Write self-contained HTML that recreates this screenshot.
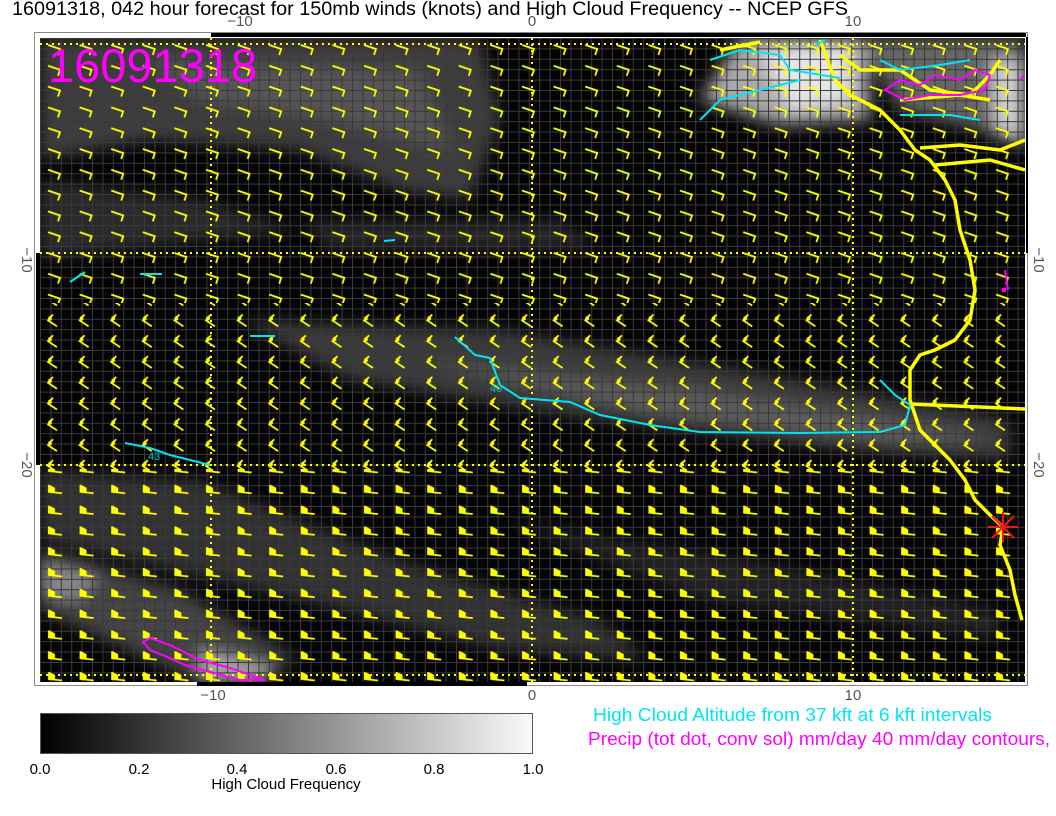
<!DOCTYPE html>
<html><head><meta charset="utf-8"><style>
html,body{margin:0;padding:0;background:#fff;}
svg{display:block;}
text{font-family:"Liberation Sans",sans-serif;}
</style></head><body>
<svg width="1056" height="816" viewBox="0 0 1056 816" xmlns="http://www.w3.org/2000/svg">
<defs>
<pattern id="grid" x="40" y="38" width="10.4" height="10.4" patternUnits="userSpaceOnUse">
<path d="M0.5,0 V10.4 M0,0.5 H10.4" stroke="#3a3a3a" stroke-width="1" fill="none"/>
</pattern>
<pattern id="pA" x="40" y="40" width="31.6" height="20.8" patternUnits="userSpaceOnUse">
<path d="M8,5 L20,9 L18,15" stroke="#ffff00" stroke-width="1.8" fill="none"/>
</pattern>
<pattern id="pB" x="40" y="40" width="31.6" height="20.8" patternUnits="userSpaceOnUse">
<path d="M13,4 L8,10 L17,16" stroke="#ffff00" stroke-width="1.8" fill="none"/>
<path d="M8,7 L11,5 L12,9 L9,11Z" fill="#ffff00"/>
</pattern>
<pattern id="pC" x="40" y="40" width="31.6" height="20.8" patternUnits="userSpaceOnUse">
<path d="M8,15 L22,16.5" stroke="#ffff00" stroke-width="1.8" fill="none"/>
<path d="M8,8 L9.5,8 L15,11 L15,15 L8,15Z" fill="#ffff00"/>
</pattern>
<filter id="bl" x="-20%" y="-20%" width="140%" height="140%"><feGaussianBlur stdDeviation="8"/></filter>
<clipPath id="pc"><rect x="40" y="38" width="985" height="644"/></clipPath>
<linearGradient id="cb" x1="0" x2="1"><stop offset="0" stop-color="#000"/><stop offset="1" stop-color="#fafafa"/></linearGradient>
</defs>

<text x="12" y="15" font-size="19" fill="#000" textLength="836" lengthAdjust="spacingAndGlyphs">16091318, 042 hour forecast for 150mb winds (knots) and High Cloud Frequency -- NCEP GFS</text>
<g font-size="15" fill="#555" text-anchor="middle">
<text x="240" y="26">−10</text><text x="532" y="26">0</text><text x="853" y="26">10</text>
<text x="213" y="700">−10</text><text x="532" y="700">0</text><text x="853" y="700">10</text>
</g>
<text transform="translate(22,260) rotate(90)" font-size="15" fill="#555" text-anchor="middle">−10</text>
<text transform="translate(22,465) rotate(90)" font-size="15" fill="#555" text-anchor="middle">−20</text>
<text transform="translate(1034,260) rotate(90)" font-size="15" fill="#555" text-anchor="middle">−10</text>
<text transform="translate(1034,465) rotate(90)" font-size="15" fill="#555" text-anchor="middle">−20</text>

<rect x="34.5" y="32.5" width="993" height="653" fill="none" stroke="#888" stroke-width="1"/>
<rect x="211" y="33" width="815" height="4" fill="#000"/>
<rect x="36" y="253" width="4" height="212" fill="#000"/>
<rect x="1026" y="37" width="2" height="216" fill="#000"/>
<rect x="197" y="682" width="330" height="4" fill="#000"/>

<g clip-path="url(#pc)">
<rect x="40" y="38" width="985" height="644" fill="#040404"/>
<g filter="url(#bl)">
<path d="M40,38 L480,38 L500,120 L470,200 L400,190 L300,150 L150,140 L40,160Z" fill="#3c3c3c"/>
<path d="M150,60 L420,70 L450,150 L330,120 L200,100Z" fill="#555"/>
<path d="M40,180 L200,200 L300,230 L40,260Z" fill="#2a2a2a"/>
<path d="M300,220 L560,220 L600,250 L330,250Z" fill="#262626"/>
<path d="M740,38 L870,38 L870,120 L780,125 L700,100Z" fill="#aaa"/>
<path d="M760,50 L850,45 L850,100 L790,110Z" fill="#e6e6e6"/>
<path d="M860,38 L1025,38 L1025,150 L980,130 L900,110Z" fill="#666"/>
<path d="M990,60 L1025,60 L1025,140 L995,130Z" fill="#cfcfcf"/>
<path d="M240,320 L500,330 L800,380 L1010,420 L1010,460 L850,450 L600,420 L350,380Z" fill="#3a3a3a"/>
<path d="M420,360 L700,390 L900,420 L1000,440 L900,445 L650,415Z" fill="#5c5c5c"/>
<path d="M40,470 L200,480 L400,560 L600,620 L650,660 L500,650 L300,600 L40,540Z" fill="#333"/>
<path d="M40,550 L180,590 L300,660 L200,682 L40,610Z" fill="#444"/>
<path d="M40,560 L100,575 L80,600 L40,595Z" fill="#888"/>
<path d="M500,520 L750,560 L1000,610 L1000,640 L700,600Z" fill="#222"/>
<path d="M200,650 L280,670 L260,682 L200,682Z" fill="#aaa"/>
</g>
<rect x="40" y="38" width="985" height="644" fill="url(#grid)"/>
<rect x="40" y="38" width="985" height="265" fill="url(#pA)"/>
<rect x="40" y="303" width="985" height="166" fill="url(#pB)"/>
<rect x="40" y="469" width="985" height="213" fill="url(#pC)"/>
<g stroke="#ffff00" stroke-width="2" stroke-dasharray="2,4" fill="none">
<path d="M40,44 H1025 M40,253 H1025 M40,465 H1025 M40,675 H1025"/>
<path d="M211,38 V682 M532,38 V682 M853,38 V682"/>
</g>
<g stroke="#ffff00" stroke-width="3.5" fill="none" stroke-linejoin="round">
<path d="M820,40 L835,80 L850,95 L880,110 L900,130 L915,150 L930,160 L945,180 L955,200 L960,230 L970,260 L975,290 L970,320 L955,340 L935,350 L920,355 L910,370 L910,400 L920,430 L935,445 L950,460 L965,480 L975,500 L990,515 L1003,527 L1000,545 L1010,570 L1015,595 L1022,620"/>
<path d="M910,404 L1025,409"/>
<path d="M920,148 L960,145 L1000,150 L1025,140"/>
<path d="M935,165 L990,160 L1025,170"/>
<path d="M720,50 L760,42 M840,55 L860,70 L900,70 L930,90 L970,95 L990,75 L1000,60"/>
<path d="M900,100 L960,95 L990,100"/>
</g>
<g stroke="#00e5f0" stroke-width="2" fill="none">
<path d="M455,337 L475,355 L490,358 L500,385 L520,398 L570,402 L600,415 L650,425 L700,432 L800,433 L880,432 L905,425 L910,405 L895,395 L880,380"/>
<path d="M125,443 L150,448 L170,455 L210,465"/>
<path d="M250,336 L275,336"/>
<path d="M70,282 L85,272 M140,274 L162,274"/>
<path d="M384,241 L395,240"/>
<path d="M710,60 L740,50 L780,55 L790,70 L840,78 M700,120 L720,100 L760,90 L800,80 M900,115 L950,115 L980,120"/>
<path d="M825,40 L815,45 M880,60 L900,70 L940,65 L970,60"/>
</g>
<text x="490" y="392" font-size="11" fill="#00c0c8">40</text>
<text x="148" y="460" font-size="11" fill="#00c0c8">43</text>
<g stroke="#ff00ff" stroke-width="2" fill="none">
<path d="M143,642 L150,638 L170,645 L200,660 L230,668 L265,680 L240,680 L210,672 L185,665 L165,656 L150,650 Z"/>
<path d="M885,90 L900,80 L920,85 L935,75 L960,80 L975,70 L990,75 L985,90 L960,95 L930,95 L905,100 Z"/>
<path d="M1020,80 L1025,75 M1005,270 L1008,290"/>
</g>
<rect x="1002" y="288" width="4" height="4" fill="#ff00ff"/>
<g stroke="#ff1010" stroke-width="2">
<path d="M988,527 L1018,527 M1003,512 L1003,542 M992,516 L1014,538 M1014,516 L992,538"/>
</g>
</g>

<text x="48" y="82" font-size="47" fill="#ff00ff">16091318</text>

<rect x="40.5" y="713.5" width="492" height="40" fill="url(#cb)" stroke="#555"/>
<g font-size="15" fill="#000" text-anchor="middle">
<text x="40" y="774">0.0</text><text x="139" y="774">0.2</text><text x="237" y="774">0.4</text><text x="336" y="774">0.6</text><text x="434" y="774">0.8</text><text x="533" y="774">1.0</text>
</g>
<text x="286" y="789" font-size="15" text-anchor="middle" fill="#000">High Cloud Frequency</text>
<text x="593" y="721" font-size="18" fill="#00e5f0" textLength="399" lengthAdjust="spacingAndGlyphs">High Cloud Altitude from 37 kft at 6 kft intervals</text>
<text x="588" y="745" font-size="18" fill="#ff00ff" textLength="462" lengthAdjust="spacingAndGlyphs">Precip (tot dot, conv sol) mm/day 40 mm/day contours,</text>
</svg>
</body></html>
